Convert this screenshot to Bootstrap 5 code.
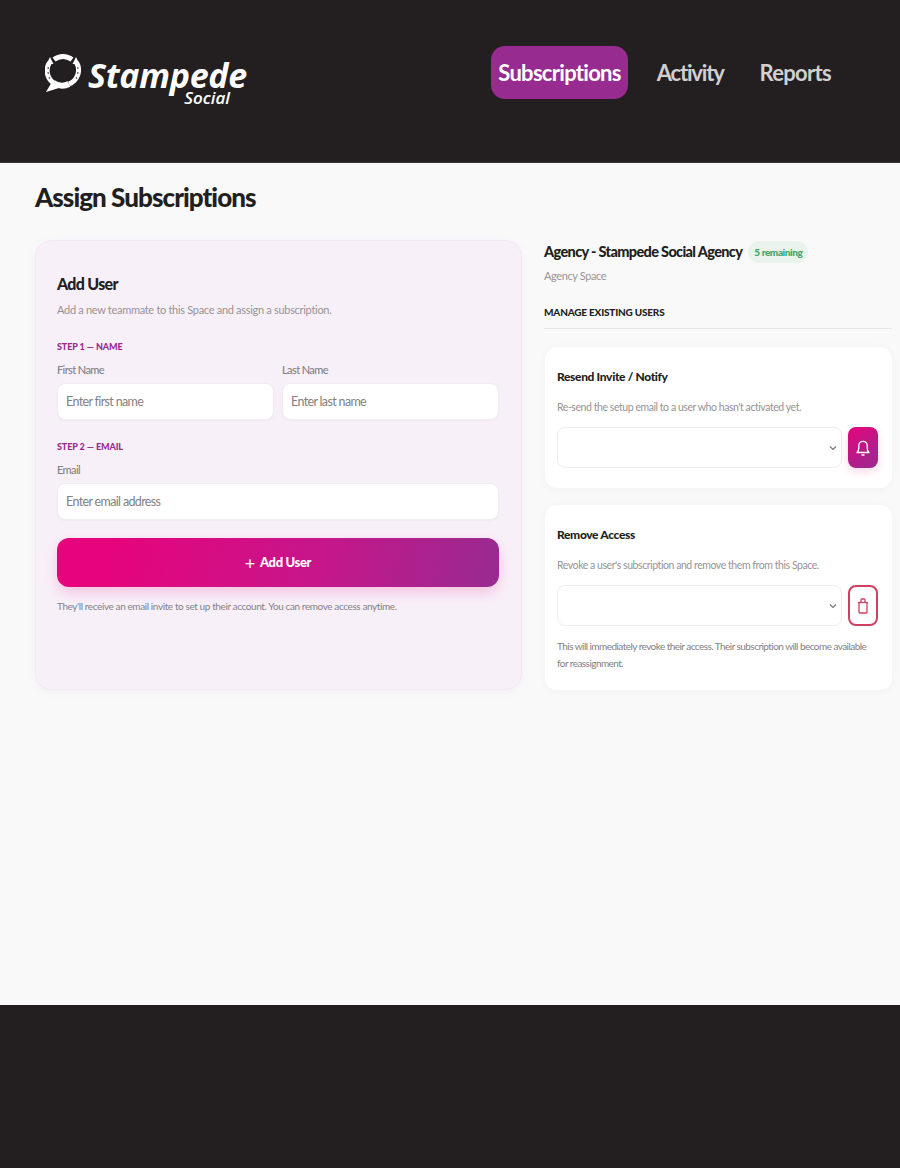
<!DOCTYPE html>
<html lang="en">
<head>
  <meta charset="UTF-8">
  <meta name="viewport" content="width=device-width, initial-scale=1.0">
  <title>Assign Subscriptions</title>
  <link href="https://cdn.jsdelivr.net/npm/bootstrap@5.3.2/dist/css/bootstrap.min.css" rel="stylesheet">
  <style>
    body { font-family: "Lato", "Liberation Sans", sans-serif; background: #f9f9fa; color: #231f20; min-height: 1168px; }
    .site-head { background: #231f20; height: 163px; padding: 46px 62px 0 45px; border-bottom: 1px solid #3a3637; }
    .logo-mark { width: 36px; height: 40px; margin-top: 7px; flex: none; }
    .logo-text { margin-top: 13px; margin-left: 7px; width: 158px; }
    .logo-name { font-family: "Open Sans", sans-serif; font-style: italic; font-weight: 700; font-size: 34px; line-height: 32px; color: #fff; letter-spacing: -.3px; white-space: nowrap; }
    .logo-sub { font-family: "Open Sans", sans-serif; font-style: italic; font-weight: 600; font-size: 17px; line-height: 18px; color: #fff; text-align: right; margin-right: 16px; margin-top: -2px; }
    .top-nav { gap: 22px; }
    .top-link { color: #d1d0d0; font-size: 22px; font-weight: 700; letter-spacing: -.7px; padding: 0 7px; height: 53px; line-height: 53px; border-radius: 14px; text-decoration: none; }
    .top-link.is-on { background: #972b90; color: #fff; }
    .top-link.tight { letter-spacing: -1.2px; }
    .main-area { height: 842px; padding: 17px 8px 0 35px; }
    .page-title { font-size: 26px; font-weight: 900; line-height: 34px; letter-spacing: -.95px; margin-bottom: 26px; }
    .two-cols { display: grid; grid-template-columns: 487px 348px; gap: 22px; }
    .add-panel { background: #f8f0f9; border: 1px solid #f3e8f4; border-radius: 16px; padding: 31px 22px 0 21px; height: 450px; box-shadow: 0 2px 10px rgba(151, 43, 144, .05); }
    .add-panel h2 { font-size: 16px; font-weight: 900; letter-spacing: -.7px; line-height: 24px; margin-bottom: 5px; }
    .hint { font-size: 11px; letter-spacing: -.3px; color: #969293; line-height: 18px; margin-bottom: 21px; }
    .step-tag { font-size: 9px; font-weight: 900; letter-spacing: -.1px; color: #972b90; line-height: 14px; }
    .step-two { margin-top: 20px; }
    .fld-label { font-size: 11px; font-weight: 500; letter-spacing: -.6px; color: #858182; line-height: 16px; margin: 8px 0 5px; display: block; }
    .form-control.fld { height: 37px; border: 1px solid #f0ecf0; border-radius: 8px; font-family: inherit; font-size: 12.5px; letter-spacing: -.65px; padding: 0 8px; box-shadow: 0 1px 2px rgba(0, 0, 0, .03); }
    .form-control.fld::placeholder { color: #858182; opacity: 1; }
    .go-btn { height: 49px; width: 100%; margin-top: 18px; border: 0; border-radius: 12px; color: #fff; font-size: 13px; font-weight: 900; letter-spacing: -.35px; background: linear-gradient(100deg, #e6047c 12%, #c5168a 60%, #972b90 100%); box-shadow: 0 6px 14px rgba(230, 4, 124, .18); display: flex; align-items: center; justify-content: center; gap: 5px; }
    .go-btn:hover { color: #fff; }
    .plus-sign { font-size: 18px; font-weight: 400; line-height: 1; }
    .note { font-size: 10px; letter-spacing: -.4px; line-height: 14px; color: #858182; margin-top: 12px; }
    .space-name { font-size: 14.5px; font-weight: 900; letter-spacing: -.65px; line-height: 24px; }
    .left-pill { background: #e9f3ec; color: #3fa56b; font-size: 10px; font-weight: 900; letter-spacing: -.4px; padding: 0 6px; height: 22px; line-height: 22px; border-radius: 11px; }
    .head-row { gap: 6px; }
    .space-kind { font-size: 11px; letter-spacing: -.4px; color: #989495; line-height: 16px; margin-top: 4px; }
    .manage-head { font-size: 10px; font-weight: 900; letter-spacing: -.2px; line-height: 16px; margin-top: 20px; padding-bottom: 8px; border-bottom: 1px solid #e6e4e5; margin-bottom: 18px; }
    .tool-card { background: #fff; border-radius: 12px; padding: 20px 14px 0 12px; margin-left: 1px; box-shadow: 0 1px 8px rgba(0, 0, 0, .04); }
    .tool-one { height: 141px; margin-bottom: 17px; }
    .tool-two { height: 185px; }
    .tool-card h3 { font-size: 12px; font-weight: 900; letter-spacing: -.35px; line-height: 20px; margin-bottom: 12px; }
    .tool-card .hint { font-size: 10.5px; letter-spacing: -.44px; line-height: 16px; margin-bottom: 12px; color: #979394; }
    .form-select.pick { height: 41px; border: 1px solid #efedee; border-radius: 8px; background-color: #fff; background-size: 8px 6px; background-position: right 4px center; background-image: url("data:image/svg+xml,%3csvg xmlns='http://www.w3.org/2000/svg' viewBox='0 0 8 6'%3e%3cpath fill='none' stroke='%23777' stroke-width='1.2' d='M1 1.5l3 3 3-3'/%3e%3c/svg%3e"); }
    .pick-row { gap: 6px; }
    .icon-go, .icon-del { width: 30px; height: 41px; flex: none; border-radius: 8px; padding: 0; display: flex; align-items: center; justify-content: center; }
    .icon-go { background: linear-gradient(145deg, #e6047c, #972b90); border: 0; color: #fff; box-shadow: 0 4px 10px rgba(230, 4, 124, .15); }
    .icon-del { background: #fff; border: 2px solid #cf3f60; color: #cf3f60; }
    .small-note { font-size: 10px; letter-spacing: -.55px; line-height: 17px; color: #858182; margin-top: 12px; max-width: 312px; }
    .site-foot { background: #231f20; height: 163px; }
  </style>
</head>
<body>
  <header class="site-head d-flex justify-content-between align-items-start">
    <div class="d-flex">
      <svg class="logo-mark" viewBox="0 0 36 40" aria-hidden="true">
        <!-- horseshoe ring with a speech tail -->
        <path d="M4.5 9.5A15 15 0 0 0 8 29.5" fill="none" stroke="#fff" stroke-width="5"/>
        <path d="M31.5 9.5A15 15 0 0 1 24 31" fill="none" stroke="#fff" stroke-width="5"/>
        <path d="M8 29.5A15 15 0 0 0 24 31" fill="none" stroke="#fff" stroke-width="6"/>
        <path d="M9 6.5A15 15 0 0 1 27 6.5" fill="none" stroke="#fff" stroke-width="5"/>
        <path d="M1.500 11L5 4l3.500 7Z M27.500 11L31 4l3.500 7Z" fill="#fff"/>
        <path d="M8 27L1 39l13-4Z" fill="#fff"/>
        <g fill="#231f20">
          <circle cx="3.200" cy="15" r=".8"/><circle cx="3.200" cy="20" r=".8"/><circle cx="4.500" cy="25" r=".8"/>
          <circle cx="32.800" cy="15" r=".8"/><circle cx="32.800" cy="20" r=".8"/><circle cx="31.500" cy="25" r=".8"/>
        </g>
      </svg>
      <div class="logo-text">
        <div class="logo-name">Stampede</div>
        <div class="logo-sub">Social</div>
      </div>
    </div>
    <nav class="top-nav d-flex">
      <a class="top-link is-on" href="#">Subscriptions</a>
      <a class="top-link tight" href="#">Activity</a>
      <a class="top-link" href="#">Reports</a>
    </nav>
  </header>

  <main class="main-area">
    <h1 class="page-title">Assign Subscriptions</h1>
    <div class="two-cols">
      <section class="add-panel">
        <h2>Add User</h2>
        <p class="hint">Add a new teammate to this Space and assign a subscription.</p>
        <div class="step-tag">STEP 1 — NAME</div>
        <div class="row g-2">
          <div class="col-6">
            <label class="fld-label">First Name</label>
            <input class="form-control fld" placeholder="Enter first name">
          </div>
          <div class="col-6">
            <label class="fld-label">Last Name</label>
            <input class="form-control fld" placeholder="Enter last name">
          </div>
        </div>
        <div class="step-tag step-two">STEP 2 — EMAIL</div>
        <label class="fld-label">Email</label>
        <input class="form-control fld" placeholder="Enter email address">
        <button class="btn go-btn" type="button"><span class="plus-sign">+</span> Add User</button>
        <p class="note mb-0">They'll receive an email invite to set up their account. You can remove access anytime.</p>
      </section>

      <section>
        <div class="d-flex align-items-center head-row">
          <span class="space-name">Agency - Stampede Social Agency</span>
          <span class="left-pill">5 remaining</span>
        </div>
        <div class="space-kind">Agency Space</div>
        <div class="manage-head">MANAGE EXISTING USERS</div>

        <div class="tool-card tool-one">
          <h3>Resend Invite / Notify</h3>
          <p class="hint">Re-send the setup email to a user who hasn't activated yet.</p>
          <div class="d-flex pick-row">
            <select class="form-select pick"></select>
            <button class="btn icon-go" type="button" aria-label="Notify">
              <svg width="16" height="18" viewBox="0 0 16 18" fill="none" stroke="currentColor" stroke-width="1.3" stroke-linejoin="round"><path d="M2 13.500h12c-1.200-1.200-1.800-2.200-1.800-4.500V6.500a4.200 4.200 0 0 0-8.400 0V9c0 2.300-.6 3.300-1.800 4.500Z"/><path d="M7 16h2" stroke-linecap="round"/></svg>
            </button>
          </div>
        </div>

        <div class="tool-card tool-two">
          <h3>Remove Access</h3>
          <p class="hint">Revoke a user's subscription and remove them from this Space.</p>
          <div class="d-flex pick-row">
            <select class="form-select pick"></select>
            <button class="btn icon-del" type="button" aria-label="Remove">
              <svg width="14" height="16" viewBox="0 0 14 16" fill="none" stroke="currentColor" stroke-width="1.3" stroke-linejoin="round"><path d="M3 4.500V14a1 1 0 0 0 1 1h6a1 1 0 0 0 1-1V4.500"/><path d="M2 4.500h10"/><path d="M5 4.500V2a1 1 0 0 1 1-1h2a1 1 0 0 1 1 1v2.500"/></svg>
            </button>
          </div>
          <p class="small-note mb-0">This will immediately revoke their access. Their subscription will become available for reassignment.</p>
        </div>
      </section>
    </div>
  </main>

  <footer class="site-foot"></footer>
  <script src="https://cdn.jsdelivr.net/npm/bootstrap@5.3.2/dist/js/bootstrap.bundle.min.js"></script>
</body>
</html>
